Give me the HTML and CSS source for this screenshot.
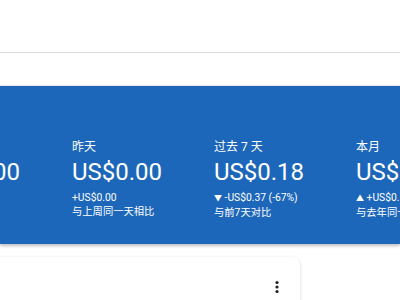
FILE: index.html
```html
<!DOCTYPE html>
<html>
<head>
  <title>收入概览</title>
  <link rel="stylesheet" href="styles.css">
</head>
<body>
  <div class="topbar"></div>
  <div class="subbar"></div>

  <div class="summary">
    <div class="stats">
      <div class="stat">
        <div class="stat-label">今天</div>
        <div class="stat-value">US$0.00</div>
        <div class="stat-change">+US$0.00</div>
        <div class="stat-note">与昨天相比</div>
      </div>
      <div class="stat">
        <div class="stat-label">昨天</div>
        <div class="stat-value">US$0.00</div>
        <div class="stat-change">+US$0.00</div>
        <div class="stat-note">与上周同一天相比</div>
      </div>
      <div class="stat">
        <div class="stat-label">过去 7 天</div>
        <div class="stat-value">US$0.18</div>
        <div class="stat-change"><span class="arrow">▼</span> -US$0.37 (-67%)</div>
        <div class="stat-note">与前7天对比</div>
      </div>
      <div class="stat">
        <div class="stat-label">本月</div>
        <div class="stat-value">US$0.55</div>
        <div class="stat-change"><span class="arrow">▲</span> +US$0.12 (+28%)</div>
        <div class="stat-note">与去年同一时期相比</div>
      </div>
    </div>
  </div>

  <div class="cards">
    <div class="card">
      <div class="card-head">
        <button class="menu-btn" title="更多">
          <svg width="18" height="18" viewBox="0 0 18 18">
            <circle cx="9" cy="4.5" r="1.6" fill="#202124"/>
            <circle cx="9" cy="9" r="1.6" fill="#202124"/>
            <circle cx="9" cy="13.5" r="1.6" fill="#202124"/>
          </svg>
        </button>
      </div>
    </div>
  </div>
</body>
</html>
```

FILE: styles.css
```css
body {
  margin: 0;
  background-color: #fff;
  font-family: Roboto, "Noto Sans CJK SC", sans-serif;
  overflow: hidden;
}

.topbar {
  height: 52px;
  background-color: #fff;
  border-bottom: 1px solid #dadce0;
}

.subbar {
  height: 32px;
  background-color: #fff;
}

.summary {
  height: 159px;
  box-sizing: border-box;
  padding-top: 53px;
  background-color: #1d67bb;
  border-top: 1px solid #e8eaed;
  box-shadow: 0 2px 3px rgba(0, 0, 0, 0.25);
  color: #fff;
}

.stats {
  display: flex;
  margin-left: -70px;
}

.stat {
  flex: 0 0 142px;
  white-space: nowrap;
}

.stat-label {
  font-size: 12px;
  line-height: 17px;
}

.stat-value {
  font-size: 24px;
  line-height: 32px;
  margin-bottom: 3px;
}

.stat-change,
.stat-note {
  font-size: 10.3px;
  line-height: 14px;
}

.arrow {
  font-size: 8px;
}

.cards {
  display: flex;
  padding-top: 13px;
}

.card {
  width: 320px;
  height: 80px;
  margin-left: -20px;
  background-color: #fff;
  border-radius: 8px;
  box-shadow: 0 1px 3px rgba(60, 64, 67, 0.25);
}

.card-head {
  display: flex;
  justify-content: flex-end;
  padding: 21px 14px 0 0;
}

.menu-btn {
  padding: 0;
  border: none;
  background: none;
  display: flex;
  cursor: pointer;
}
```
